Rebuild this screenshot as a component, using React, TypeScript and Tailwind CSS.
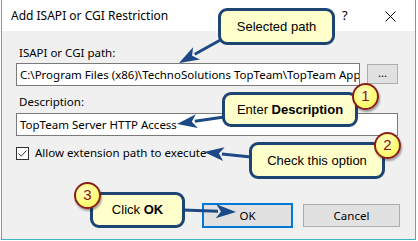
import React from "react";

const ui = { fontFamily: '"Noto Sans", "Open Sans", sans-serif' };
const arial = { fontFamily: '"Liberation Sans", Arial, sans-serif' };

function Badge({ n, className }: { n: string; className: string }) {
  return (
    <div
      className={`absolute w-[27px] h-[27px] rounded-full border-2 border-[#8a1f1f] bg-[radial-gradient(circle_at_40%_35%,#ffffd0,#ffff70_60%,#f3e35a)] shadow-[1px_2px_2px_rgba(0,0,0,0.35)] flex items-center justify-center text-[15px] text-[#8a1010] ${className}`}
      style={arial}
    >
      {n}
    </div>
  );
}

function Callout({ className, children }: { className: string; children: React.ReactNode }) {
  return (
    <div
      className={`absolute rounded-[9px] border-[3px] border-[#1d4574] bg-[#ffffcc] flex items-center justify-center text-[13px] text-black ${className}`}
      style={arial}
    >
      {children}
    </div>
  );
}

function Arrow({ x1, y1, x2, y2 }: { x1: number; y1: number; x2: number; y2: number }) {
  const dx = x2 - x1;
  const dy = y2 - y1;
  const len = Math.hypot(dx, dy);
  const ux = dx / len;
  const uy = dy / len;
  const hl = 20;
  const hw = 7;
  const bx = x2 - ux * hl;
  const by = y2 - uy * hl;
  const px = -uy * hw;
  const py = ux * hw;
  return (
    <g>
      <line x1={x1} y1={y1} x2={bx + ux * 2} y2={by + uy * 2} stroke="#1d4a86" strokeWidth={3} />
      <polygon
        points={`${x2},${y2} ${bx + px},${by + py} ${bx + ux * 5},${by + uy * 5} ${bx - px},${by - py}`}
        fill="#1d4a86"
      />
    </g>
  );
}

export default function App() {
  return (
    <div className="relative w-[418px] h-[241px] bg-white overflow-hidden">
      <div className="ml-[1px] w-[415px] h-[240px] border-l border-r border-b border-[#3bb3c3] flex flex-col" style={ui}>
        <div className="h-[31px] bg-white flex items-center text-[12px] text-black pl-[9px] pt-[1px]">
          <span className="flex-1">Add ISAPI or CGI Restriction</span>
          <span className="w-[14px] text-[13px] mr-[29px]">?</span>
          <svg width="11" height="11" viewBox="0 0 11 11" className="mr-[19px]">
            <path d="M0.5 0.5 L10.5 10.5 M10.5 0.5 L0.5 10.5" stroke="#000" strokeWidth="1" />
          </svg>
        </div>
        <div className="flex-1 bg-[#f0f0f0] pl-[14px] pr-[15px] pt-[14px] text-[11.5px] text-black flex flex-col">
          <div className="h-[16px] leading-[16px] pl-[3px]">ISAPI or CGI path:</div>
          <div className="mt-[2px] flex items-start gap-[7px]">
            <div className="w-[344px] h-[23px] bg-white border border-[#7a7a7a] pl-[3px] leading-[21px] overflow-hidden whitespace-nowrap">
              C:\Program Files (x86)\TechnoSolutions TopTeam\TopTeam Application
            </div>
            <div className="mt-[1px] w-[31px] h-[20px] bg-[#e1e1e1] border border-[#adadad] flex items-center justify-center leading-none pb-[3px]">
              ...
            </div>
          </div>
          <div className="mt-[8px] h-[16px] leading-[16px] pl-[3px]">Description:</div>
          <div className="mt-[3px] w-[382px] h-[23px] bg-white border border-[#7a7a7a] pl-[3px] leading-[21px] whitespace-nowrap">
            TopTeam Server HTTP Access
          </div>
          <div className="mt-[9px] h-[16px] flex items-center gap-[6px]">
            <div className="w-[13px] h-[13px] border border-[#333] bg-white flex items-center justify-center">
              <svg width="11" height="11" viewBox="0 0 11 11">
                <path d="M1.5 5.5 L4.2 8.2 L9.5 2.5" stroke="#333" strokeWidth="1" fill="none" />
              </svg>
            </div>
            <span>Allow extension path to execute</span>
          </div>
          <div className="mt-[42px] flex pl-[186px] gap-[10px]">
            <div className="w-[91px] h-[25px] bg-[#e1e1e1] border-2 border-[#0078d7] flex items-center justify-center">
              OK
            </div>
            <div className="mt-[1px] w-[97px] h-[23px] bg-[#e1e1e1] border border-[#adadad] flex items-center justify-center">
              Cancel
            </div>
          </div>
        </div>
      </div>

      <svg className="absolute left-0 top-0 pointer-events-none" width="418" height="241">
        <Arrow x1={224} y1={38} x2={179} y2={63} />
        <Arrow x1={224} y1={117} x2={177} y2={124} />
        <Arrow x1={251} y1={157} x2={204} y2={152} />
        <Arrow x1={183} y1={210} x2={236} y2={212} />
      </svg>

      <Callout className="left-[218px] top-[8px] w-[117px] h-[37px]">Selected path</Callout>
      <Callout className="left-[222px] top-[92px] w-[136px] h-[35px]">
        <span>
          Enter <b>Description</b>
        </span>
      </Callout>
      <Callout className="left-[249px] top-[142px] w-[136px] h-[37px]">Check this option</Callout>
      <Callout className="left-[90px] top-[192px] w-[95px] h-[36px]">
        <span>
          Click <b>OK</b>
        </span>
      </Callout>

      <Badge n="1" className="left-[352px] top-[83px]" />
      <Badge n="2" className="left-[374px] top-[132px]" />
      <Badge n="3" className="left-[74px] top-[182px]" />
    </div>
  );
}
